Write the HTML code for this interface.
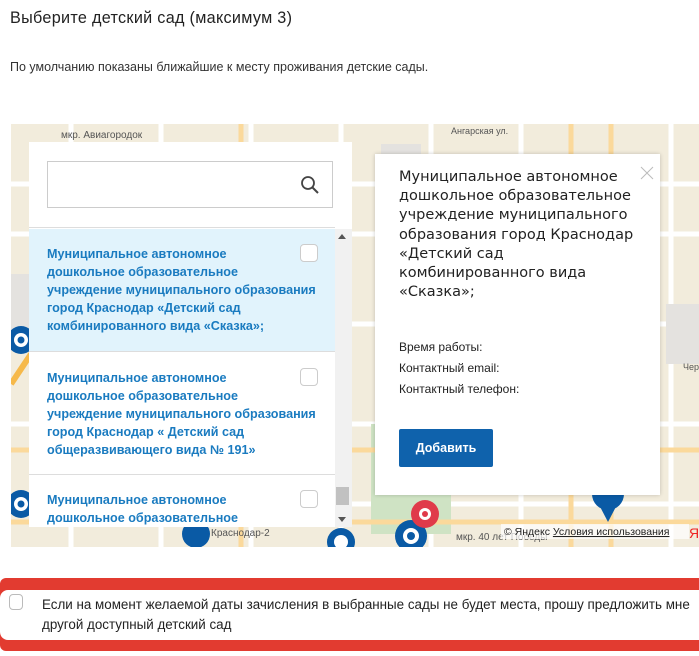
<!DOCTYPE html>
<html><head><meta charset="utf-8"><style>
*{margin:0;padding:0;box-sizing:border-box}
body{width:699px;height:656px;background:#fff;font-family:"Liberation Sans",sans-serif;position:relative;overflow:hidden;color:#222}
.abs{position:absolute}
h1{position:absolute;left:10px;top:9px;font-size:16.2px;font-weight:normal;color:#222;font-family:"Liberation Sans",sans-serif;letter-spacing:0.3px}
.sub{left:10px;top:60px;font-size:12.5px;color:#333}
.map{left:11px;top:124px;width:688px;height:423px;background:#f2ecdc;overflow:hidden}
.panel{left:29px;top:142px;width:323px;height:385px;background:#fff;overflow:hidden}
.search{left:18px;top:19px;width:286px;height:47px;border:1px solid #ccc}
.item{position:absolute;left:0;width:306px;border-bottom:1px solid #ddd;padding:16px 0 0 18px;font-size:12.6px;font-weight:bold;color:#1a7bc0;line-height:18px}
.cb{position:absolute;right:17px;top:15px;width:18px;height:18px;border:1px solid #ccc;border-radius:4px;background:#fff}
.popup{left:375px;top:154px;width:285px;height:341px;background:#fff;box-shadow:0 0 4px rgba(0,0,0,.2)}
.ptitle{left:24px;top:14px;font-size:14.5px;line-height:19.2px;color:#222;font-family:"DejaVu Sans","Liberation Sans",sans-serif}
.pl{left:24px;font-size:12px;color:#222}
.btn{left:24px;top:275px;width:94px;height:38px;background:#0f62ac;border-radius:2px;color:#fff;font-size:12.5px;font-weight:bold;text-align:center;line-height:38px}
</style></head><body>
<h1>Выберите детский сад (максимум 3)</h1>
<div class="abs sub">По умолчанию показаны ближайшие к месту проживания детские сады.</div>
<div class="abs map">
<svg width="688" height="423" class="abs" style="left:0;top:0">
<g stroke="#fff" stroke-width="5" fill="none">
<path d="M0 60H688M0 110H688M0 200H688M0 300H688M0 380H688M60 0V423M150 0V423M240 0V423M330 0V423M420 0V423M510 0V423M600 0V423M660 0V423"/>
</g>
<g fill="#e4e2df"><rect x="370" y="20" width="40" height="30"/><rect x="0" y="150" width="20" height="60"/><rect x="655" y="180" width="33" height="60"/></g>
<rect x="360" y="300" width="80" height="110" fill="#cfe3c4"/>
<path d="M0 260L20 230" stroke="#f6b94a" stroke-width="6"/>
<path d="M230 0V423M560 0V423M600 0V423M0 326H688M0 398H688" stroke="#fbd99b" stroke-width="5"/>
<text x="50" y="14" font-size="10" fill="#555" font-family="Liberation Sans">мкр. Авиагородок</text>
<text x="440" y="10" font-size="9" fill="#555" font-family="Liberation Sans">Ангарская ул.</text>
<text x="200" y="412" font-size="10" fill="#555" font-family="Liberation Sans">Краснодар-2</text>
<text x="445" y="416" font-size="10" fill="#555" font-family="Liberation Sans">мкр. 40 лет Победы</text>
<text x="672" y="246" font-size="9" fill="#555" font-family="Liberation Sans">Чер</text>
<g fill="#0a5aa5"><circle cx="10" cy="216" r="14"/><circle cx="10" cy="380" r="14"/><circle cx="400" cy="412" r="16"/><circle cx="597" cy="370" r="16"/><circle cx="330" cy="418" r="14"/><circle cx="185" cy="410" r="14"/><path d="M585 375L597 398L609 375Z"/></g>
<g fill="#fff"><circle cx="10" cy="216" r="7"/><circle cx="10" cy="380" r="7"/><circle cx="400" cy="412" r="8"/><circle cx="330" cy="418" r="7"/></g>
<g fill="#0a5aa5"><circle cx="10" cy="216" r="3.5"/><circle cx="10" cy="380" r="3.5"/><circle cx="400" cy="412" r="4"/></g>
<circle cx="414" cy="390" r="14" fill="#e03a4a"/><circle cx="414" cy="390" r="6" fill="#fff"/><circle cx="414" cy="390" r="3" fill="#e03a4a"/>
<rect x="490" y="400" width="188" height="15" fill="rgba(255,255,255,.7)"/>
<text x="493" y="411" font-size="10.5" fill="#222" font-family="Liberation Sans">© Яндекс <tspan text-decoration="underline">Условия использования</tspan></text>
<text x="678" y="414" font-size="14" fill="#e22" font-family="Liberation Sans">Я</text>
</svg>
</div>
<div class="abs panel">
<div class="abs search"><svg class="abs" style="right:12px;top:13px" width="20" height="20"><circle cx="8" cy="8" r="6" stroke="#444" stroke-width="1.8" fill="none"/><path d="M12.5 12.5L18 18" stroke="#444" stroke-width="2"/></svg></div>
<div style="position:absolute;left:0;top:85px;width:306px;border-top:1px solid #ddd"></div>
<div class="item" style="top:87px;height:123px;background:#e1f3fc">Муниципальное автономное<br>дошкольное образовательное<br>учреждение муниципального образования<br>город Краснодар «Детский сад<br>комбинированного вида «Сказка»;<div class="cb"></div></div>
<div class="item" style="top:211px;height:122px">Муниципальное автономное<br>дошкольное образовательное<br>учреждение муниципального образования<br>город Краснодар « Детский сад<br>общеразвивающего вида № 191»<div class="cb"></div></div>
<div class="item" style="top:333px;height:80px">Муниципальное автономное<br>дошкольное образовательное<div class="cb"></div></div>
<div class="abs" style="left:306px;top:87px;width:17px;height:298px;background:#f1f1f1"></div>
<div class="abs" style="left:309px;top:92px;width:0;height:0;border:4px solid transparent;border-bottom:5px solid #555;border-top:0"></div>
<div class="abs" style="left:309px;top:375px;width:0;height:0;border:4px solid transparent;border-top:5px solid #555;border-bottom:0"></div>
<div class="abs" style="left:307px;top:345px;width:13px;height:18px;background:#c1c1c1"></div>
</div>
<div class="abs popup">
<svg class="abs" style="right:6px;top:12px" width="14" height="14"><path d="M1 1L13 13M13 1L1 13" stroke="#bbb" stroke-width="1"/></svg>
<div class="abs ptitle">Муниципальное автономное<br>дошкольное образовательное<br>учреждение муниципального<br>образования город Краснодар<br>«Детский сад<br>комбинированного вида<br>«Сказка»;</div>
<div class="abs pl" style="top:186px">Время работы:</div>
<div class="abs pl" style="top:207px">Контактный email:</div>
<div class="abs pl" style="top:228px">Контактный телефон:</div>
<div class="abs btn">Добавить</div>
</div>
<div class="abs" style="left:0;top:578px;width:699px;height:73px;background:#e23b30;border-radius:6px 0 0 6px"></div>
<div class="abs" style="left:0;top:590px;width:699px;height:50px;background:#fff;border-radius:8px 0 0 8px"></div>
<div class="abs" style="left:9px;top:594px;width:14px;height:16px;border:1px solid #bbb;border-radius:4px"></div>
<div class="abs" style="left:42px;top:595px;font-size:13.4px;line-height:20px;color:#222">Если на момент желаемой даты зачисления в выбранные сады не будет места, прошу предложить мне<br>другой доступный детский сад</div>
</body></html>
